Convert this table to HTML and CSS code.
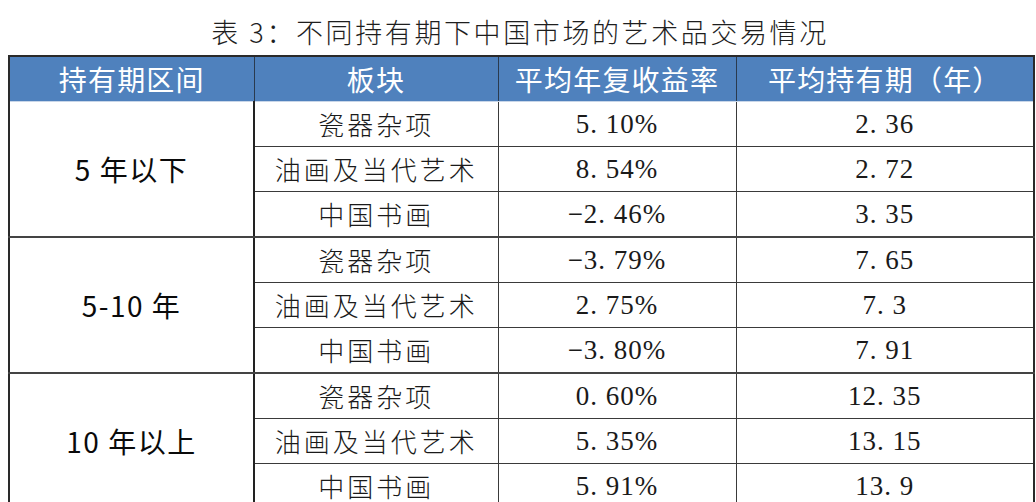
FILE: index.html
```html
<!DOCTYPE html>
<html lang="zh-CN">
<head>
<meta charset="utf-8">
<link rel="stylesheet" href="styles.css">
</head>
<body>
<div class="caption">表 3：不同持有期下中国市场的艺术品交易情况</div>
<table class="tbl">
  <colgroup>
    <col class="c1"><col class="c2"><col class="c3"><col class="c4">
  </colgroup>
  <thead>
    <tr><th>持有期区间</th><th>板块</th><th>平均年复收益率</th><th>平均持有期（年）</th></tr>
  </thead>
  <tbody>
    <tr><td class="grp" rowspan="3">5 年以下</td><td class="cat">瓷器杂项</td><td class="num">5.&nbsp;10%</td><td class="num">2.&nbsp;36</td></tr>
    <tr><td class="cat">油画及当代艺术</td><td class="num">8.&nbsp;54%</td><td class="num">2.&nbsp;72</td></tr>
    <tr><td class="cat">中国书画</td><td class="num">−2.&nbsp;46%</td><td class="num">3.&nbsp;35</td></tr>
    <tr><td class="grp" rowspan="3">5-10 年</td><td class="cat">瓷器杂项</td><td class="num">−3.&nbsp;79%</td><td class="num">7.&nbsp;65</td></tr>
    <tr><td class="cat">油画及当代艺术</td><td class="num">2.&nbsp;75%</td><td class="num">7.&nbsp;3</td></tr>
    <tr><td class="cat">中国书画</td><td class="num">−3.&nbsp;80%</td><td class="num">7.&nbsp;91</td></tr>
    <tr><td class="grp" rowspan="3">10 年以上</td><td class="cat">瓷器杂项</td><td class="num">0.&nbsp;60%</td><td class="num">12.&nbsp;35</td></tr>
    <tr><td class="cat">油画及当代艺术</td><td class="num">5.&nbsp;35%</td><td class="num">13.&nbsp;15</td></tr>
    <tr><td class="cat">中国书画</td><td class="num">5.&nbsp;91%</td><td class="num">13.&nbsp;9</td></tr>
  </tbody>
</table>
</body>
</html>
```
FILE: styles.css
```css
html, body {
  margin: 0;
  padding: 0;
  background: #ffffff;
}
body {
  width: 1036px;
  height: 502px;
  overflow: hidden;
  font-family: "Noto Sans CJK SC", "Liberation Sans", sans-serif;
  color: #111;
}
.caption {
  height: 55px;
  box-sizing: border-box;
  padding-top: 13px;
  text-align: center;
  font-size: 27px;
  font-weight: 300;
  letter-spacing: 2.6px;
  line-height: 38px;
  color: #1e1e1e;
  padding-left: 4px;
}
.tbl {
  margin-left: 8px;
  width: 1025px;
  border-collapse: collapse;
  table-layout: fixed;
  border: 2px solid #2a2a2a;
}
.c1 { width: 245px; }
.c2 { width: 244px; }
.c3 { width: 238px; }
.c4 { width: 298px; }
.tbl th {
  background: #4f81bd;
  color: #ffffff;
  font-weight: normal;
  font-size: 28px;
  letter-spacing: 1.2px;
  height: 44px;
  padding: 0;
  text-align: center;
  border-left: 1px solid #2a3a4e;
  border-right: 1px solid #2a3a4e;
  border-bottom: 1px solid #c8d6e8;
  line-height: 44px;
}
.tbl td {
  height: 44px;
  padding: 0;
  text-align: center;
  border: 1px solid #3a3a3a;
  line-height: 44px;
}
.tbl tbody tr:nth-child(3n) td,
.tbl td.grp {
  border-bottom: 2px solid #444;
}
.tbl td.grp {
  font-family: "Noto Sans CJK SC", "Liberation Sans", sans-serif;
  font-size: 28px;
  font-weight: normal;
  letter-spacing: 1.5px;
  color: #0a0a0a;
  border-right: 2px solid #222;
}
.tbl td.cat {
  font-size: 26px;
  font-weight: 300;
  letter-spacing: 3px;
  color: #1a1a1a;
}
.tbl td.num {
  font-family: "Liberation Serif", "Noto Sans CJK SC", serif;
  font-size: 27px;
  letter-spacing: 1px;
  color: #1a1a1a;
}
```
